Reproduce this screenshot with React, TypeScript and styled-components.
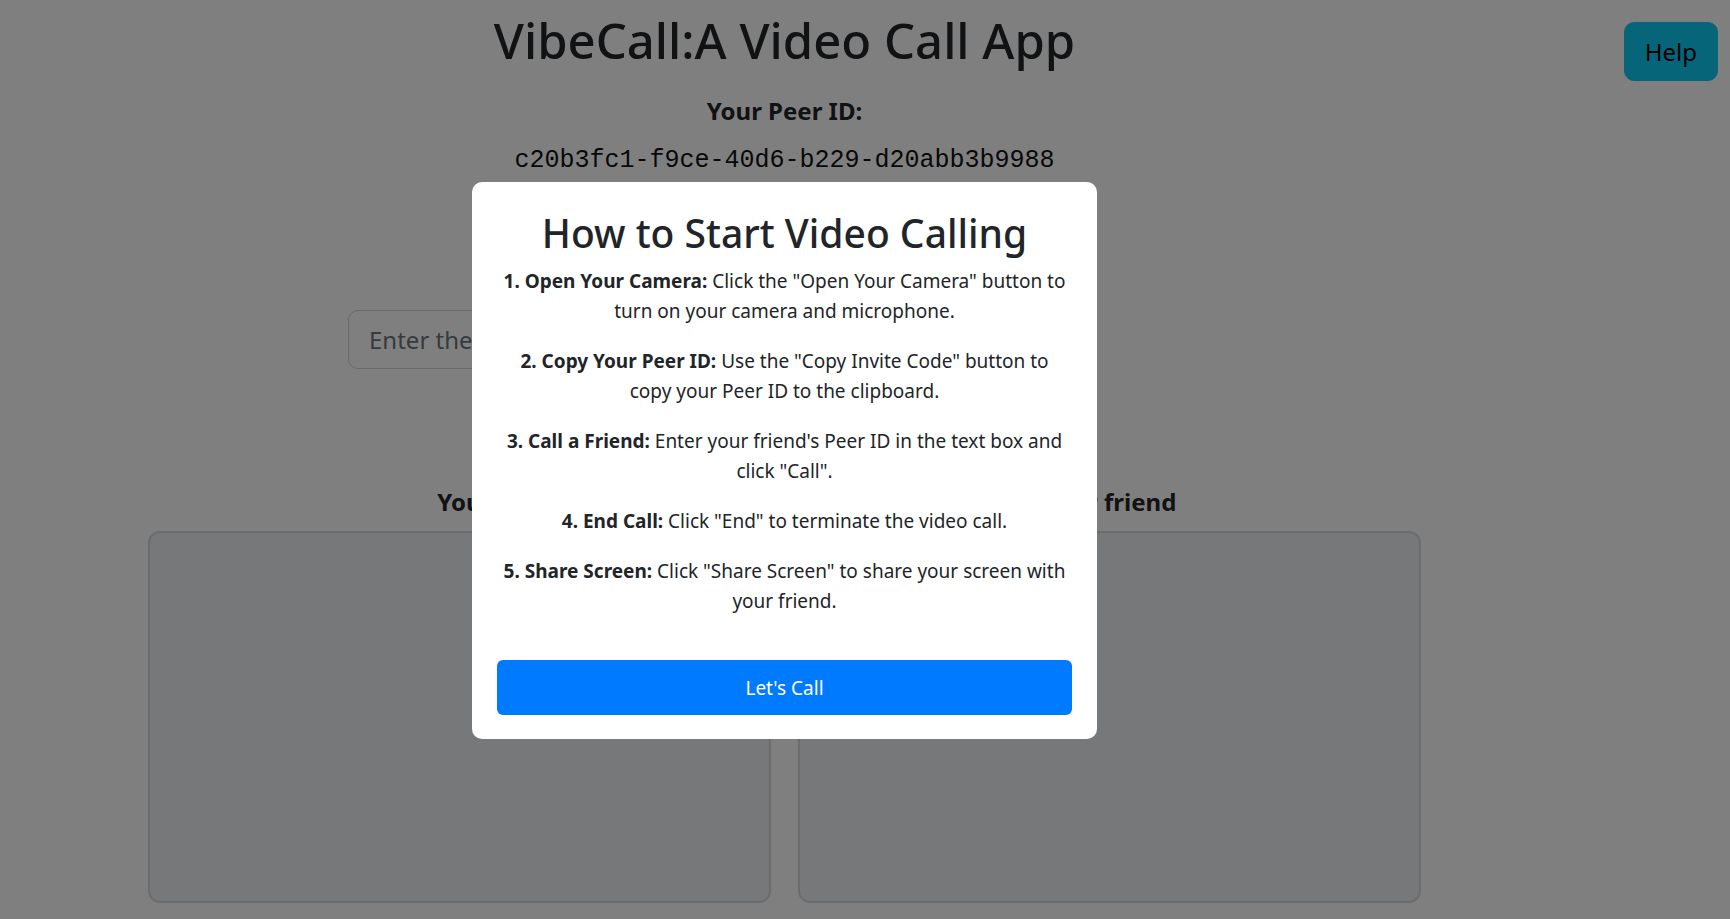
import styled, { createGlobalStyle } from 'styled-components';

const GlobalStyle = createGlobalStyle`
  html, body {
    margin: 0;
    padding: 0;
    background: #ffffff;
  }

  body {
    font-family: "Noto Sans", "Liberation Sans", sans-serif;
    color: #212529;
  }

  * {
    box-sizing: border-box;
  }
`;

const Page = styled.div`
  display: flex;
  min-height: 919px;
`;

const Main = styled.main`
  flex: 1;
  display: flex;
  flex-direction: column;
  align-items: center;
  padding-top: 10px;
`;

const Title = styled.h1`
  margin: 0;
  font-size: 49px;
  line-height: 60px;
  font-weight: 500;
`;

const PeerLabel = styled.h5`
  margin: 26px 0 0;
  font-size: 24px;
  line-height: 30px;
  font-weight: 700;
`;

const PeerId = styled.p`
  margin: 16px 0 0;
  font-family: "Liberation Mono", "Courier New", monospace;
  font-size: 25px;
  line-height: 37px;
  color: #111;
`;

const CallRow = styled.div`
  display: flex;
  align-self: flex-start;
  gap: 12px;
  margin: 131px 0 0 348px;
`;

const PeerInput = styled.input`
  width: 600px;
  height: 59px;
  padding: 0 20px;
  border: 1px solid #ced4da;
  border-radius: 10px;
  font-family: inherit;
  font-size: 24px;
  color: #212529;
  background: #fff;

  &::placeholder {
    color: #6c757d;
  }
`;

const Button = styled.button`
  border: 1px solid transparent;
  border-radius: 10px;
  padding: 0 24px;
  font-family: inherit;
  font-size: 20px;
  color: #fff;
  background: #0d6efd;
`;

const VideoGrid = styled.div`
  display: grid;
  grid-template-columns: 623px 623px;
  column-gap: 27px;
  margin-top: 118px;
`;

const VideoCol = styled.div`
  display: flex;
  flex-direction: column;
  align-items: center;
  gap: 14px;
`;

const VideoLabel = styled.h5`
  margin: 0;
  font-size: 24px;
  line-height: 30px;
  font-weight: 700;
`;

const VideoBox = styled.div`
  width: 100%;
  height: 372px;
  border: 2px solid #d6d9dd;
  border-radius: 12px;
  background: #eef0f3;
`;

const Aside = styled.aside`
  width: 161px;
  display: flex;
  justify-content: flex-end;
  align-items: flex-start;
  padding: 22px 12px 0 0;
`;

const HelpButton = styled.button`
  height: 59px;
  padding: 0 20px;
  border: 1px solid #0dcaf0;
  border-radius: 10px;
  background: #0dcaf0;
  color: #000;
  font-family: inherit;
  font-size: 24px;
`;

const Overlay = styled.div`
  position: fixed;
  inset: 0;
  background: rgba(0, 0, 0, 0.5);
  display: flex;
  justify-content: center;
  align-items: flex-start;
  padding: 182px 161px 0 0;
`;

const Modal = styled.div`
  width: 625px;
  padding: 27px 25px 24px;
  background: #fff;
  border-radius: 10px;
  text-align: center;
`;

const ModalTitle = styled.h2`
  margin: 0 0 9px;
  font-size: 39px;
  line-height: 48px;
  font-weight: 500;
`;

const Step = styled.p`
  margin: 0 0 20px;
  padding: 0 5px;
  font-size: 19px;
  line-height: 30px;
  color: #212529;

  b {
    font-weight: 700;
  }
`;

const CallButton = styled.button`
  display: block;
  width: 100%;
  height: 55px;
  margin-top: 44px;
  border: none;
  border-radius: 6px;
  background: #007bff;
  color: #fff;
  font-family: inherit;
  font-size: 19px;
`;

const steps = [
  { head: '1. Open Your Camera:', text: 'Click the "Open Your Camera" button to turn on your camera and microphone.' },
  { head: '2. Copy Your Peer ID:', text: 'Use the "Copy Invite Code" button to copy your Peer ID to the clipboard.' },
  { head: '3. Call a Friend:', text: 'Enter your friend\'s Peer ID in the text box and click "Call".' },
  { head: '4. End Call:', text: 'Click "End" to terminate the video call.' },
  { head: '5. Share Screen:', text: 'Click "Share Screen" to share your screen with your friend.' },
];

export default function App() {
  return (
    <>
      <GlobalStyle />
      <Page>
        <Main>
          <Title>VibeCall:A Video Call App</Title>
          <PeerLabel>Your Peer ID:</PeerLabel>
          <PeerId>c20b3fc1-f9ce-40d6-b229-d20abb3b9988</PeerId>
          <CallRow>
            <PeerInput placeholder="Enter the Peer ID of your friend" />
            <Button>Call</Button>
          </CallRow>
          <VideoGrid>
            <VideoCol>
              <VideoLabel>You</VideoLabel>
              <VideoBox />
            </VideoCol>
            <VideoCol>
              <VideoLabel>Your friend</VideoLabel>
              <VideoBox />
            </VideoCol>
          </VideoGrid>
        </Main>
        <Aside>
          <HelpButton>Help</HelpButton>
        </Aside>
      </Page>
      <Overlay>
        <Modal>
          <ModalTitle>How to Start Video Calling</ModalTitle>
          {steps.map((s) => (
            <Step key={s.head}>
              <b>{s.head}</b> {s.text}
            </Step>
          ))}
          <CallButton>Let's Call</CallButton>
        </Modal>
      </Overlay>
    </>
  );
}
